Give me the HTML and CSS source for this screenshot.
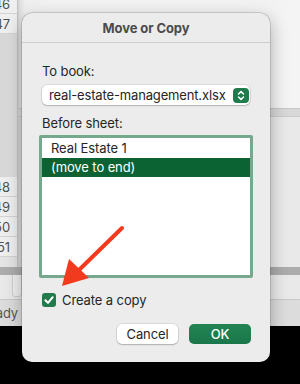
FILE: index.html
```html
<!DOCTYPE html>
<html>
<head>
<meta charset="utf-8">
<link rel="stylesheet" href="styles.css">
</head>
<body>
<div class="screen">
  <div class="sheet">
    <div class="grid">
      <div class="rowhdr">
        <div class="rh first">46</div>
        <div class="rh">47</div>
        <div class="rh-gap"></div>
        <div class="rh">48</div>
        <div class="rh">49</div>
        <div class="rh">50</div>
        <div class="rh">51</div>
        <div class="rh-rest"></div>
      </div>
      <div class="canvas">
        <div class="cv-top"></div>
        <div class="cv-band"></div>
        <div class="cv-mid"></div>
      </div>
    </div>
    <div class="hscroll"></div>
    <div class="tabs"><div class="tabbtn"></div></div>
    <div class="status"><span class="status-text">Ready</span></div>
  </div>
  <div class="desk"></div>
</div>

<div class="dialog">
  <div class="title">Move or Copy</div>
  <div class="body">
    <div class="label first-label">To book:</div>
    <div class="popup">
      <span class="popup-text">real-estate-management.xlsx</span>
      <span class="stepper">
        <svg width="16" height="15" viewBox="0 0 16 15">
          <path d="M5.5 6 L8 3.6 L10.5 6" fill="none" stroke="#fff" stroke-width="1.5" stroke-linecap="round" stroke-linejoin="round"/>
          <path d="M5.5 9 L8 11.4 L10.5 9" fill="none" stroke="#fff" stroke-width="1.5" stroke-linecap="round" stroke-linejoin="round"/>
        </svg>
      </span>
    </div>
    <div class="label second-label">Before sheet:</div>
    <div class="list">
      <div class="item">Real Estate 1</div>
      <div class="item selected">(move to end)</div>
    </div>
    <div class="check-row">
      <span class="checkbox">
        <svg width="14" height="14" viewBox="0 0 14 14">
          <path d="M3.4 7.2 L6 9.9 L10.7 4.2" fill="none" stroke="#fff" stroke-width="2" stroke-linecap="round" stroke-linejoin="round"/>
        </svg>
      </span>
      <span class="check-label">Create a copy</span>
    </div>
    <div class="buttons">
      <button class="btn cancel">Cancel</button>
      <button class="btn ok">OK</button>
    </div>
  </div>
</div>

<svg class="arrow" width="300" height="384" viewBox="0 0 300 384">
  <line x1="122" y1="228" x2="79" y2="270" stroke="#f23a1e" stroke-width="4" stroke-linecap="round"/>
  <polygon points="62,286 69,259 89,278" fill="#f23a1e"/>
</svg>
</body>
</html>
```

FILE: styles.css
```css
* {
  box-sizing: border-box;
  margin: 0;
  padding: 0;
}

html, body {
  width: 300px;
  height: 384px;
  overflow: hidden;
}

body {
  position: relative;
  background: #000;
  font-family: Inter, "Noto Sans", "Liberation Sans", sans-serif;
  font-size: 13px;
  letter-spacing: -0.1px;
  color: #262626;
}

.screen {
  display: flex;
  flex-direction: column;
  height: 384px;
}

.sheet {
  height: 326px;
  display: flex;
  flex-direction: column;
  background: #ececec;
}

.grid {
  height: 267px;
  display: grid;
  grid-template-columns: 18px 1fr;
}

.rowhdr {
  display: flex;
  flex-direction: column;
  background: #d8d8d8;
  border-right: 1px solid #c4c4c4;
  overflow: hidden;
}

.rh {
  flex: 0 0 20px;
  display: flex;
  align-items: center;
  justify-content: flex-end;
  padding-right: 7px;
  background: #efefef;
  border-bottom: 1px solid #d3d3d3;
  color: #505050;
  font-size: 13px;
  white-space: nowrap;
}

.rh.first {
  margin-top: -6px;
}

.rh-gap {
  flex: 0 0 143px;
  background: linear-gradient(90deg, #d6d6d6, #dedede);
}

.rh-rest {
  flex: 1;
  background: #e4e4e4;
}

.canvas {
  display: flex;
  flex-direction: column;
  background: #f4f4f4;
}

.cv-top {
  flex: 0 0 108px;
  background: linear-gradient(90deg, #dcdcdc 0, #eeeeee 6px, #f2f2f2 30px, #f2f2f2 250px, #f6f6f6 300px);
  border-left: 1px solid #d4d4d4;
}

.cv-band {
  flex: 0 0 9px;
  background: #d8d8d8;
  border-top: 1px solid #c6c6c6;
  border-bottom: 1px solid #cacaca;
}

.cv-mid {
  flex: 1;
  background: linear-gradient(90deg, #d2d2d2, #dedede 6px, #e9e9e9 40%, #e9e9e9);
}

.hscroll {
  flex: 0 0 8px;
  background: #acacac;
}

.tabs {
  flex: 0 0 25px;
  display: flex;
  background: #e9e9e9;
  border-bottom: 1px solid #c9c9c9;
}

.tabbtn {
  width: 10px;
  margin: 0 0 2px 12px;
  border: 1px solid #cfcfcf;
  border-top: none;
  border-radius: 0 0 3px 3px;
  background: #efefef;
}

.status {
  flex: 1;
  display: flex;
  align-items: center;
  background: #dcdcdc;
  overflow: hidden;
  white-space: nowrap;
}

.status-text {
  margin-left: -20px;
  color: #555;
  font-size: 13px;
}

.desk {
  flex: 1;
  background: #000;
}

/* Dialog overlays the sheet */
.dialog {
  position: absolute;
  left: 22px;
  top: 13px;
  width: 248px;
  height: 349px;
  background: #ececec;
  border-radius: 10px;
  box-shadow: 0 0 0 0.5px rgba(0, 0, 0, 0.25), 0 6px 18px rgba(0, 0, 0, 0.3);
  display: flex;
  flex-direction: column;
}

.title {
  height: 30px;
  display: flex;
  align-items: center;
  justify-content: center;
  font-weight: 700;
  color: #4b4b4b;
  border-bottom: 1px solid #cdcdcd;
}

.body {
  display: flex;
  flex-direction: column;
  padding: 0 20px;
}

.label {
  line-height: 16px;
  color: #262626;
}

.first-label {
  margin-top: 20px;
}

.second-label {
  margin-top: 10px;
}

.popup {
  margin-top: 6px;
  height: 20px;
  display: flex;
  align-items: center;
  justify-content: space-between;
  padding: 0 1px 0 7px;
  background: #fff;
  border-radius: 5px;
  box-shadow: 0 0 0 0.5px rgba(0, 0, 0, 0.15), 0 1px 1.5px rgba(0, 0, 0, 0.18);
}

.popup-text {
  white-space: nowrap;
  letter-spacing: -0.15px;
}

.stepper {
  width: 16px;
  height: 15px;
  display: flex;
  background: #1f7b4c;
  border-radius: 4px;
}

.list {
  margin: 4px -3px 0;
  height: 143px;
  background: #fff;
  border: 3px solid #76a88d;
  border-radius: 2px;
  display: flex;
  flex-direction: column;
}

.item {
  height: 20px;
  line-height: 20px;
  padding-left: 9px;
  color: #262626;
}

.item.selected {
  height: 19px;
  line-height: 19px;
  background: #0b6334;
  color: #fff;
}

.check-row {
  margin-top: 15px;
  height: 14px;
  display: flex;
  align-items: center;
  gap: 6px;
}

.checkbox {
  width: 14px;
  height: 14px;
  display: flex;
  border-radius: 3px;
  background: #217b4d;
}

.check-label {
  line-height: 16px;
}

.buttons {
  margin-top: 17px;
  margin-right: -1px;
  display: flex;
  justify-content: flex-end;
  gap: 11px;
}

.btn {
  height: 20px;
  border: none;
  border-radius: 5px;
  font-family: inherit;
  font-size: 13px;
  letter-spacing: -0.1px;
}

.cancel {
  width: 61px;
  background: #fff;
  color: #262626;
  box-shadow: 0 0 0 0.5px rgba(0, 0, 0, 0.15), 0 1px 1.5px rgba(0, 0, 0, 0.2);
}

.ok {
  width: 62px;
  background: linear-gradient(#238452, #1a7649);
  color: #fff;
  font-weight: 500;
}

.arrow {
  position: absolute;
  left: 0;
  top: 0;
  pointer-events: none;
}
```
